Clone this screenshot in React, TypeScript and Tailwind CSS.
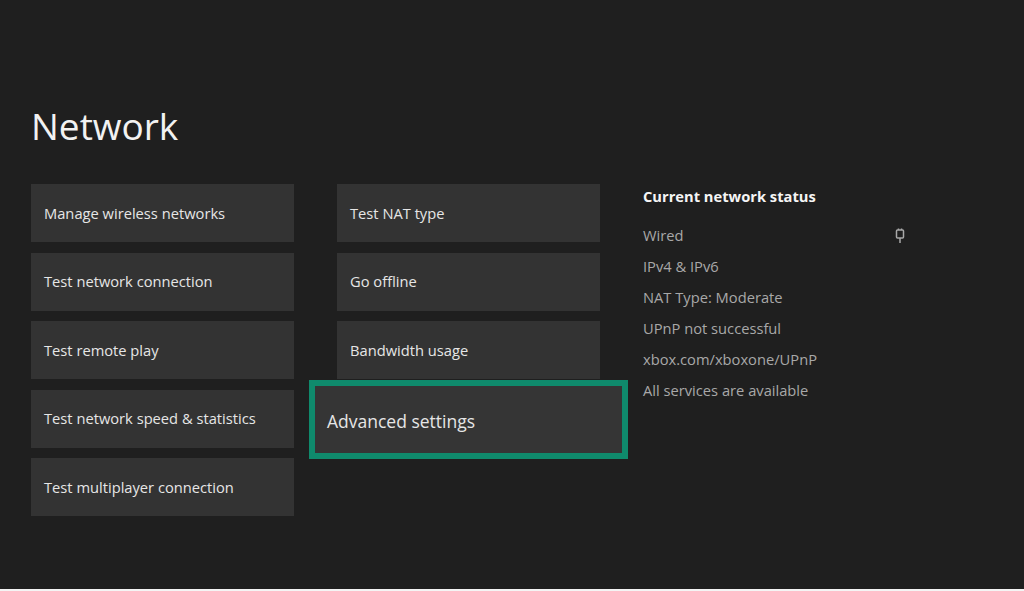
const left = [
  'Manage wireless networks',
  'Test network connection',
  'Test remote play',
  'Test network speed & statistics',
  'Test multiplayer connection',
];
const mid = ['Test NAT type', 'Go offline', 'Bandwidth usage'];
const status = ['IPv4 & IPv6', 'NAT Type: Moderate', 'UPnP not successful', 'xbox.com/xboxone/UPnP', 'All services are available'];

function Tile({ label }: { label: string }) {
  return (
    <div className="h-[58px] bg-[#333333] flex items-center pl-[13px] text-[14.7px] text-[#e6e6e6]">
      {label}
    </div>
  );
}

export default function App() {
  return (
    <div
      className="w-[1024px] h-[591px] bg-[#1f1f1f] overflow-hidden border-b-2 border-[#f4f4f4]"
      style={{ fontFamily: '"Open Sans", "Noto Sans", sans-serif' }}
    >
      <h1 className="pl-[31px] pt-[98px] text-[37px] leading-[56px] text-[#f2f2f2] font-normal">Network</h1>
      <div className="flex pl-[31px] pt-[30px]">
        <div className="w-[263px] flex flex-col gap-[10.5px]">
          {left.map((l) => <Tile key={l} label={l} />)}
        </div>
        <div className="w-[263px] ml-[43px] flex flex-col gap-[10.5px]">
          {mid.map((l) => <Tile key={l} label={l} />)}
          <div className="-mx-[28px] -my-[10px] h-[79px] border-[6px] border-[#0f8a6c] bg-[#353535] flex items-center pl-[12px] pt-[4px] text-[17.5px] text-[#e6e6e6]">
            Advanced settings
          </div>
        </div>
        <div className="ml-[43px] w-[262px] -mt-[1px] text-[14.7px]">
          <div className="font-bold text-[#f5f5f5] h-[26px] leading-[26px]">Current network status</div>
          <div className="mt-[11px] flex items-center justify-between text-[#a8a8a8] h-[31px]">
            <span>Wired</span>
            <svg width="10" height="16" viewBox="0 0 10 16" fill="none" stroke="#a8a8a8" strokeWidth="1.5">
              <rect x="1.5" y="2" width="7" height="8" rx="1" />
              <path d="M3.5 2V0.5M6.5 2V0.5M5 10v5" />
            </svg>
          </div>
          {status.map((s) => (
            <div key={s} className="text-[#a8a8a8] h-[31px] leading-[31px]">{s}</div>
          ))}
        </div>
      </div>
    </div>
  );
}
